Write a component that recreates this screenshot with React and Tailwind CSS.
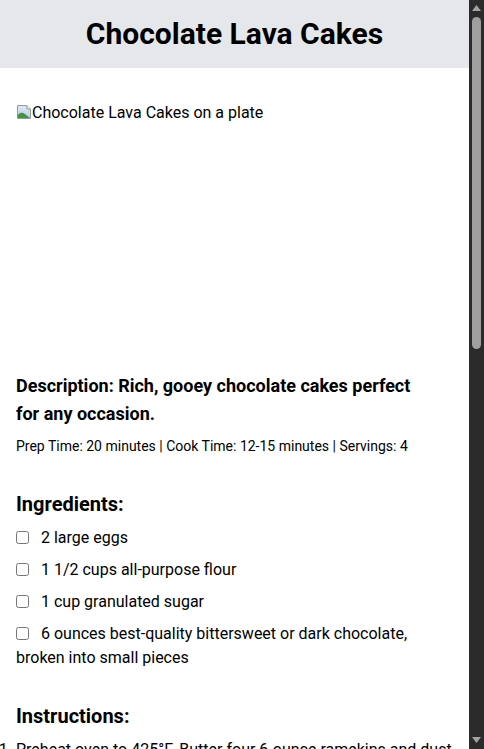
import React from "react";

const prep = "Prep Time: 20 minutes | Cook Time: 12-15 minutes | Servings: 4";

function BrokenImg() {
  return (
    <svg width="16" height="16" viewBox="0 0 16 16" className="inline-block align-[-2px]">
      <defs>
        <linearGradient id="sky" x1="0" y1="0" x2="0" y2="1">
          <stop offset="0" stopColor="#dfe8f3" />
          <stop offset="1" stopColor="#b9cde6" />
        </linearGradient>
      </defs>
      <path d="M1.5 1.5H11L14.5 5V14.5H1.5Z" fill="url(#sky)" stroke="#9a9a9a" />
      <path d="M2 14V10.5C4.5 8 7 8 9.5 10.5L14 14Z" fill="#3c9a3c" />
      <path d="M11 1.5V5H14.5" fill="#f4f4f4" stroke="#9a9a9a" />
    </svg>
  );
}

function Scrollbar() {
  return (
    <div className="w-[15px] shrink-0 h-full bg-[#2b2b2b] flex flex-col items-center pt-[5px] pb-[6px]">
      <svg width="9" height="6" viewBox="0 0 9 6" className="block">
        <path d="M4.5 0L9 6H0Z" fill="#a3a3a3" />
      </svg>
      <div className="mt-[6px] w-[9px] h-[332px] rounded-full bg-[#9f9f9f]" />
      <svg width="9" height="6" viewBox="0 0 9 6" className="block mt-auto">
        <path d="M0 0H9L4.5 6Z" fill="#a3a3a3" />
      </svg>
    </div>
  );
}

export default function App() {
  const ingredients = [
    "2 large eggs",
    "1 1/2 cups all-purpose flour",
    "1 cup granulated sugar",
    "6 ounces best-quality bittersweet or dark chocolate, broken into small pieces",
  ];
  const steps = [
    "Preheat oven to 425°F. Butter four 6-ounce ramekins and dust with cocoa powder, tapping out the excess. Place them on a baking sheet.",
    "In a medium heatproof bowl set over a saucepan of barely simmering water, melt the chocolate and butter together, stirring until smooth. Remove from heat and let cool slightly.",
    "In a separate bowl, whisk together the eggs, egg yolks and sugar until thick and pale, about 2 minutes.",
    "Fold the melted chocolate mixture into the egg mixture, then gently fold in the flour until just combined.",
    "Divide the batter evenly among the prepared ramekins.",
    "Bake for 12 to 15 minutes, until the sides are firm but the centers are still soft.",
    "Let stand for 1 minute, then run a knife around the edges and invert onto plates. Serve immediately.",
  ];
  return (
    <div className="h-[749px] flex overflow-hidden bg-white text-black font-['Roboto',sans-serif]">
      <div className="flex-1 min-w-0 overflow-hidden">
        <header className="bg-[#e5e7eb] py-4 text-center">
          <h1 className="text-3xl font-bold">Chocolate Lava Cakes</h1>
        </header>
        <main className="p-4">
          <div className="mt-[19px] h-[253px] mb-4 text-base leading-5">
            <BrokenImg />
            Chocolate Lava Cakes on a plate
          </div>
          <h2 className="max-w-[418px] text-lg leading-7 font-bold">
            Description: Rich, gooey chocolate cakes perfect for any occasion.
          </h2>
          <p className="mt-2 text-sm leading-5">{prep}</p>

          <h3 className="mt-[34px] mb-2 text-xl leading-7 font-bold">Ingredients:</h3>
          <ul>
            {ingredients.map((t) => (
              <li key={t} className="mb-2 leading-6">
                <input type="checkbox" className="mr-2 w-[13px] h-[13px] align-[-1px]" /> {t}
              </li>
            ))}
          </ul>

          <h3 className="mt-8 mb-2 text-xl leading-7 font-bold">Instructions:</h3>
          <ol className="list-decimal list-outside">
            {steps.map((t) => (
              <li key={t} className="mb-2 leading-6">{t}</li>
            ))}
          </ol>
        </main>
      </div>
      <Scrollbar />
    </div>
  );
}
